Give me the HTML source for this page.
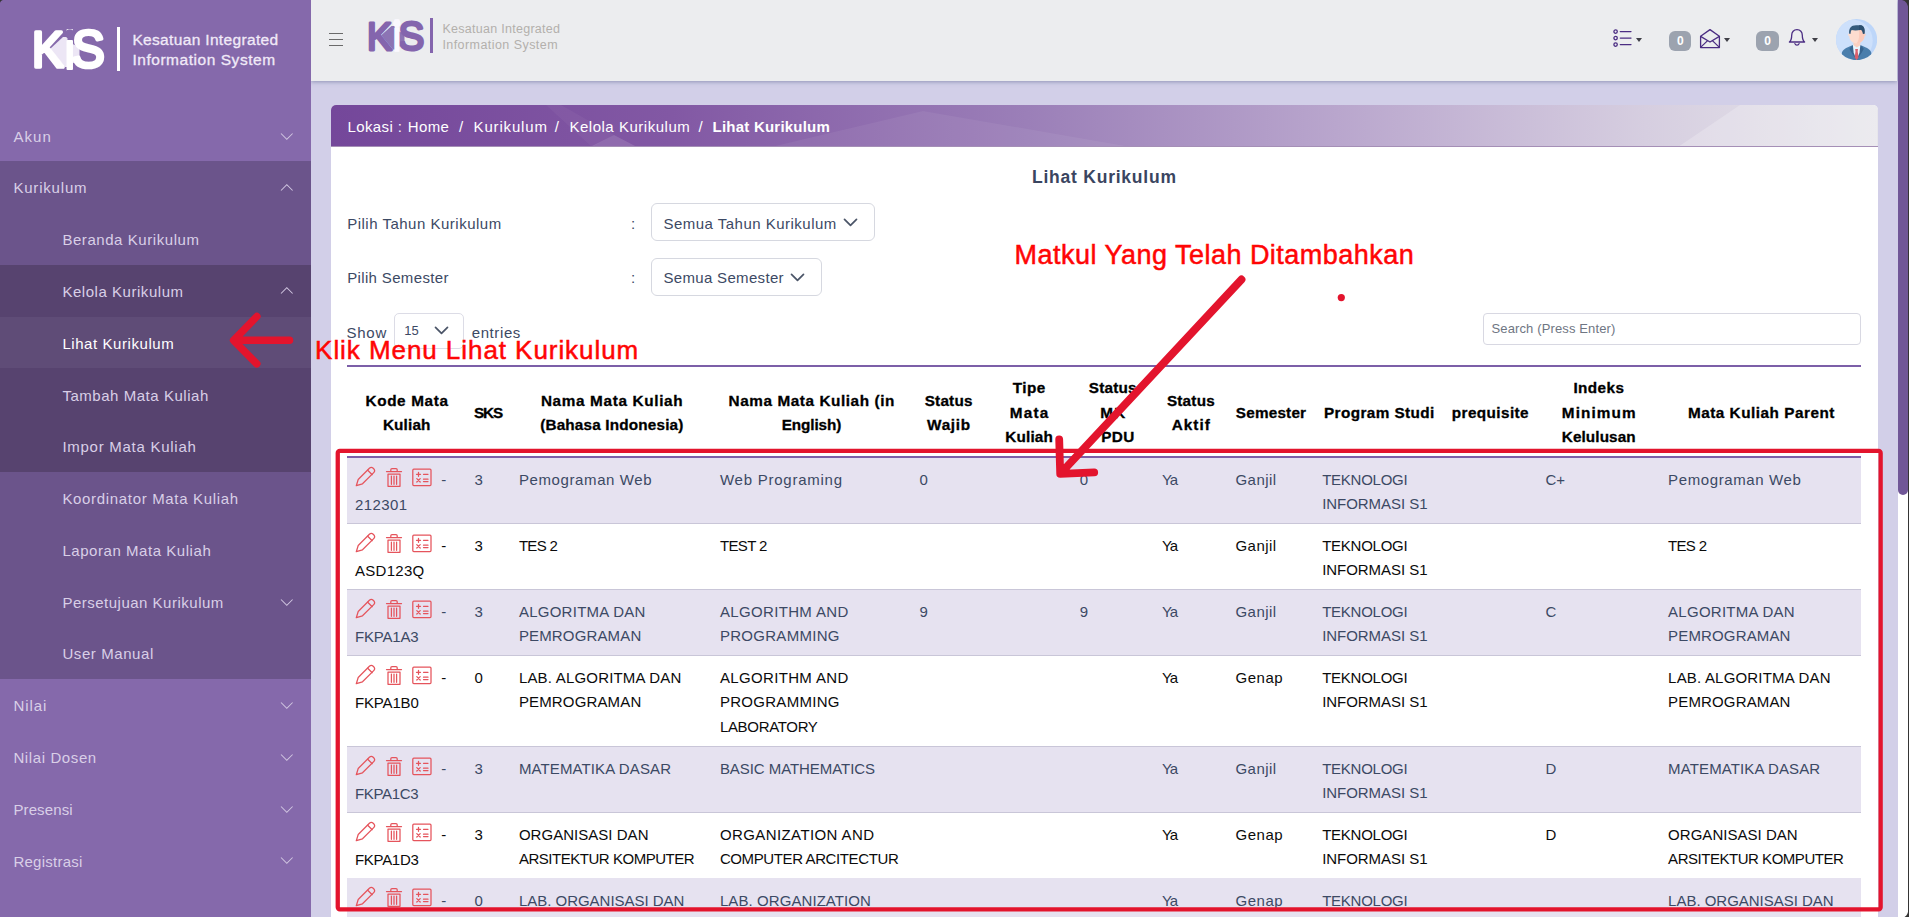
<!DOCTYPE html>
<html lang="id"><head><meta charset="utf-8"><title>Lihat Kurikulum - Kesatuan Integrated Information System</title>
<style>
html,body{margin:0;padding:0;}
body{width:1909px;height:917px;overflow:hidden;position:relative;background:#d2cfe8;font-family:"Liberation Sans",sans-serif;}
.b{position:absolute;display:block;}
.t{position:absolute;white-space:pre;line-height:20px;display:block;}
</style></head>
<body>
<div class="b" style="left:311px;top:0px;width:1598px;height:917px;background:#d2cfe8;"></div>
<header>
<div class="b" style="left:311px;top:0px;width:1586px;height:81px;background:#ecedef;box-shadow:0 1px 4px rgba(90,100,140,.55);"></div>
<div class="b" style="left:329px;top:33px;width:14px;height:1.2px;background:#6a6a6a;"></div>
<div class="b" style="left:329px;top:39px;width:14px;height:1.2px;background:#6a6a6a;"></div>
<div class="b" style="left:329px;top:45px;width:14px;height:1.2px;background:#6a6a6a;"></div>
<svg class="b" style="left:366.8px;top:17.9px" width="60" height="36.3" viewBox="-3 -3 76 46" font-family="Liberation Sans, sans-serif" font-size="50" stroke-linejoin="round" stroke-linecap="round" stroke-width="3.6">
<polygon points="15,19 28,7 32.5,7 32.5,37 30,37" fill="#8c74b4"/><polygon points="37.5,14 44.5,17 44.5,32 37.5,33" fill="#8c74b4"/>
<text transform="translate(-2.9,37.4) scale(.95,1)" fill="#8465ad" stroke="#8465ad">K</text>
<text transform="translate(37,37.4) scale(.98,1.02)" fill="#8465ad" stroke="#8465ad">S</text>
<text transform="translate(29.2,39.2) scale(1,1.085)" fill="#fbf9ff" stroke="#fbf9ff" stroke-width="2">i</text>
<circle cx="34.8" cy="3.9" r="4.7" fill="#faf8fe"/></svg>
<div class="b" style="left:430.3px;top:18px;width:2.6px;height:35px;background:#8465ad;"></div>
<span class="t" style="left:442.4px;top:19.2px;font-size:12.5px;color:#b3b0ac;letter-spacing:0.28px;">Kesatuan Integrated</span>
<span class="t" style="left:442.4px;top:35px;font-size:12.5px;color:#b3b0ac;letter-spacing:0.44px;">Information System</span>
<svg class="b" style="left:1612px;top:28px" width="21" height="20" viewBox="0 0 21 20" fill="none" stroke="#4b2d83" stroke-width="1.3" stroke-linecap="round">
<circle cx="3.6" cy="3.6" r="1.7"/><circle cx="3.6" cy="10.1" r="1.7"/><circle cx="3.6" cy="16.6" r="1.7"/>
<path d="M8.3 3.6H19M8.3 10.1H19M8.3 16.6H19"/></svg>
<div class="b" style="left:1636.4px;top:38px;width:0;height:0;border-left:3.8px solid transparent;border-right:3.8px solid transparent;border-top:4px solid #3f3f46"></div>
<div class="b" style="left:1669px;top:31px;width:22.4px;height:19.8px;background:#9ca3af;border-radius:6px;"></div>
<span class="t" style="left:1676.9px;top:31.1px;font-size:12px;color:#fff;font-weight:700;">0</span>
<svg class="b" style="left:1699px;top:27.5px" width="22" height="21" viewBox="0 0 22 21" fill="none" stroke="#4b2d83" stroke-width="1.3" stroke-linejoin="round">
<path d="M1.6 8.2 L11 1.6 L20.4 8.2 V19.6 H1.6 Z"/><path d="M1.6 8.4 L11 14 L20.4 8.4"/><path d="M1.6 19.4 L8.6 12.6 M20.4 19.4 L13.4 12.6"/></svg>
<div class="b" style="left:1724.4px;top:38px;width:0;height:0;border-left:3.8px solid transparent;border-right:3.8px solid transparent;border-top:4px solid #3f3f46"></div>
<div class="b" style="left:1756.4px;top:31px;width:22.4px;height:19.8px;background:#9ca3af;border-radius:6px;"></div>
<span class="t" style="left:1764.3px;top:31.1px;font-size:12px;color:#fff;font-weight:700;">0</span>
<svg class="b" style="left:1788px;top:28px" width="18" height="20" viewBox="0 0 18 20" fill="none" stroke="#4b2d83" stroke-width="1.3" stroke-linejoin="round" stroke-linecap="round">
<path d="M9 1.6c-3.3 0-5.3 2.5-5.3 5.6 0 3.6-.9 5.6-2.3 6.8h15.2c-1.4-1.2-2.3-3.2-2.3-6.8 0-3.1-2-5.6-5.3-5.6z"/><path d="M6.9 15.6a2.2 2.2 0 0 0 4.2 0"/></svg>
<div class="b" style="left:1812.4px;top:38px;width:0;height:0;border-left:3.8px solid transparent;border-right:3.8px solid transparent;border-top:4px solid #3f3f46"></div>
<svg class="b" style="left:1835.9px;top:18.8px" width="41.2" height="41.2" viewBox="0 0 41 41">
<defs><clipPath id="av"><circle cx="20.5" cy="20.5" r="20.5"/></clipPath></defs>
<g clip-path="url(#av)"><rect width="41" height="41" fill="#bdd6f9"/>
<circle cx="15.6" cy="21.5" r="21" fill="#cde0fb"/>
<path d="M5.7 41V34.5C6.2 30.6 9.5 29 16.3 26.2H24.7C31.5 29 34.8 30.6 35.3 34.5V41z" fill="#4a7eac"/>
<path d="M16.5 26.1L13.3 29.6L15.2 33.2L20.5 41zM24.5 26.1L27.7 29.6L25.8 33.2L20.5 41z" fill="#386590"/>
<path d="M16.8 25.8H24.2L23.4 33.5L20.5 40.5L17.6 33.5z" fill="#e9f4fc"/>
<path d="M19.1 29.8H21.9L21.6 32H19.4zM19.4 32H21.6L22.4 38.4L20.5 41L18.6 38.4z" fill="#d9606c"/>
<path d="M17.4 21h6.7v5.2l-3.3 2.2-3.4-2.2z" fill="#fbcfbf"/>
<circle cx="13.3" cy="15.8" r="1.3" fill="#fddccf"/><circle cx="28.2" cy="15.8" r="1.3" fill="#fccbbb"/>
<path d="M13.2 11V17C13.2 21.5 16.5 24.3 20.5 24.3C24.5 24.3 28.3 21.5 28.3 17V11z" fill="#fddccf"/>
<path d="M23 11H28.3V17C28.3 21.5 24.5 24.3 20.5 24.3C22.5 22 23 19 23 16z" fill="#fccbbb"/>
<path d="M13.1 14.8C12.5 9.2 15 6.2 20 6.2H24.6C27.6 6.4 29 9.5 28.3 14.8L26.8 14.6C26.8 12.8 26 11.3 24.6 10.7C21.5 11.7 18 11.7 15.6 11C14.8 11.9 14.6 13 14.6 14.6z" fill="#345b7d"/>
<path d="M23 6.2H24.6C27.6 6.4 29 9.5 28.3 14.8L26.8 14.6C26.8 12.8 26 11.3 24.6 10.7L23 11.1z" fill="#2b4f70"/>
</g></svg>
</header>
<aside><nav>
<div class="b" style="left:0px;top:0px;width:311px;height:917px;background:#8569ab;"></div>
<div class="b" style="left:0px;top:161px;width:311px;height:518px;background:#6b548b;"></div>
<div class="b" style="left:0px;top:265px;width:311px;height:207px;background:#57436f;"></div>
<div class="b" style="left:0px;top:316.5px;width:311px;height:51.5px;background:#5f4c77;"></div>
<svg class="b" style="left:32.2px;top:26.8px" width="76" height="46" viewBox="-3 -3 76 46" font-family="Liberation Sans, sans-serif" font-size="50" stroke-linejoin="round" stroke-linecap="round" stroke-width="3.6">
<polygon points="15,19 28,7 32.5,7 32.5,37 30,37" fill="#ece6f5"/><polygon points="37.5,14 44.5,17 44.5,32 37.5,33" fill="#ece6f5"/>
<text transform="translate(-2.9,37.4) scale(.95,1)" fill="#ffffff" stroke="#ffffff">K</text>
<text transform="translate(37,37.4) scale(.98,1.02)" fill="#ffffff" stroke="#ffffff">S</text>
<text transform="translate(29.2,39.2) scale(1,1.085)" fill="#ffffff" stroke="#ffffff" stroke-width="2">i</text>
<circle cx="34.8" cy="3.9" r="4.7" fill="#8569ab"/></svg>
<div class="b" style="left:117.3px;top:26.5px;width:2.9px;height:44.2px;background:#fff;"></div>
<span class="t" style="left:132.4px;top:29.9px;font-size:15.5px;color:#f1eaf8;letter-spacing:0.34px;-webkit-text-stroke:.3px #f1eaf8;">Kesatuan Integrated</span>
<span class="t" style="left:132.4px;top:49.5px;font-size:15.5px;color:#f1eaf8;letter-spacing:0.54px;-webkit-text-stroke:.3px #f1eaf8;">Information System</span>
<span class="t" style="left:13.4px;top:126.6px;font-size:15px;color:#d9cfe7;letter-spacing:1.1px;">Akun</span>
<svg class="b" style="left:280px;top:131.5px" width="14" height="9" viewBox="0 0 14 9" fill="none" stroke="#d0c5e0" stroke-width="1.05"><path d="M1 1.5L6.8 7.3L12.6 1.5"/></svg>
<span class="t" style="left:13.4px;top:178.4px;font-size:15px;color:#d9cfe7;letter-spacing:0.81px;">Kurikulum</span>
<svg class="b" style="left:280px;top:182.78px" width="14" height="9" viewBox="0 0 14 9" fill="none" stroke="#d0c5e0" stroke-width="1.05"><path d="M1 7.5L6.8 1.7L12.6 7.5"/></svg>
<span class="t" style="left:62.4px;top:230.2px;font-size:15px;color:#d9cfe7;letter-spacing:0.56px;">Beranda Kurikulum</span>
<span class="t" style="left:62.4px;top:281.9px;font-size:15px;color:#d9cfe7;letter-spacing:0.54px;">Kelola Kurikulum</span>
<svg class="b" style="left:280px;top:286.34px" width="14" height="9" viewBox="0 0 14 9" fill="none" stroke="#d0c5e0" stroke-width="1.05"><path d="M1 7.5L6.8 1.7L12.6 7.5"/></svg>
<span class="t" style="left:62.4px;top:333.7px;font-size:15px;color:#ffffff;letter-spacing:0.57px;">Lihat Kurikulum</span>
<span class="t" style="left:62.4px;top:385.5px;font-size:15px;color:#d9cfe7;letter-spacing:0.54px;">Tambah Mata Kuliah</span>
<span class="t" style="left:62.4px;top:437.3px;font-size:15px;color:#d9cfe7;letter-spacing:0.73px;">Impor Mata Kuliah</span>
<span class="t" style="left:62.4px;top:489.1px;font-size:15px;color:#d9cfe7;letter-spacing:0.67px;">Koordinator Mata Kuliah</span>
<span class="t" style="left:62.4px;top:540.8px;font-size:15px;color:#d9cfe7;letter-spacing:0.55px;">Laporan Mata Kuliah</span>
<span class="t" style="left:62.4px;top:592.6px;font-size:15px;color:#d9cfe7;letter-spacing:0.5px;">Persetujuan Kurikulum</span>
<svg class="b" style="left:280px;top:597.52px" width="14" height="9" viewBox="0 0 14 9" fill="none" stroke="#d0c5e0" stroke-width="1.05"><path d="M1 1.5L6.8 7.3L12.6 1.5"/></svg>
<span class="t" style="left:62.4px;top:644.4px;font-size:15px;color:#d9cfe7;letter-spacing:0.58px;">User Manual</span>
<span class="t" style="left:13.4px;top:696.2px;font-size:15px;color:#d9cfe7;letter-spacing:0.96px;">Nilai</span>
<svg class="b" style="left:280px;top:701.0800000000002px" width="14" height="9" viewBox="0 0 14 9" fill="none" stroke="#d0c5e0" stroke-width="1.05"><path d="M1 1.5L6.8 7.3L12.6 1.5"/></svg>
<span class="t" style="left:13.4px;top:748px;font-size:15px;color:#d9cfe7;letter-spacing:0.61px;">Nilai Dosen</span>
<svg class="b" style="left:280px;top:752.8600000000001px" width="14" height="9" viewBox="0 0 14 9" fill="none" stroke="#d0c5e0" stroke-width="1.05"><path d="M1 1.5L6.8 7.3L12.6 1.5"/></svg>
<span class="t" style="left:13.4px;top:799.7px;font-size:15px;color:#d9cfe7;letter-spacing:0.13px;">Presensi</span>
<svg class="b" style="left:280px;top:804.6400000000001px" width="14" height="9" viewBox="0 0 14 9" fill="none" stroke="#d0c5e0" stroke-width="1.05"><path d="M1 1.5L6.8 7.3L12.6 1.5"/></svg>
<span class="t" style="left:13.4px;top:851.5px;font-size:15px;color:#d9cfe7;letter-spacing:0.26px;">Registrasi</span>
<svg class="b" style="left:280px;top:856.4200000000001px" width="14" height="9" viewBox="0 0 14 9" fill="none" stroke="#d0c5e0" stroke-width="1.05"><path d="M1 1.5L6.8 7.3L12.6 1.5"/></svg>
</nav></aside>
<main>
<div class="b" style="left:331px;top:105px;width:1547.3px;height:812px;background:#fff;border-radius:5px 5px 0 0;"></div>
<div class="b" style="left:331px;top:105px;width:1547.3px;height:42px;border-radius:5px 5px 0 0;overflow:hidden;background:linear-gradient(90deg,#74479a 0%,#8258a4 22%,#9b7fb8 45%,#b9a6cd 65%,#d6cee0 85%,#e7e6eb 100%);border-bottom:1px solid #a58fb6;box-sizing:border-box">
<svg width="1546" height="42" viewBox="0 0 1546 42" style="position:absolute;left:0;top:0"><polygon points="259,42 283,30 306,42" fill="#fff" opacity=".13"/><polygon points="215,0 261,42 283,30 230,0" fill="#fff" opacity=".04"/><polygon points="440,42 592,6 800,42" fill="#fff" opacity=".06"/><polygon points="1347,42 1409,0 1546,0 1546,42" fill="#fff" opacity=".22"/></svg></div>
<span class="t" style="left:347.4px;top:117.2px;font-size:15px;color:#fff;letter-spacing:0.4px;">Lokasi :</span>
<span class="t" style="left:407.7px;top:117.2px;font-size:15px;color:#fff;letter-spacing:0.4px;">Home</span>
<span class="t" style="left:459px;top:117.2px;font-size:15px;color:#fff;letter-spacing:0.4px;">/</span>
<span class="t" style="left:473.6px;top:117.2px;font-size:15px;color:#fff;letter-spacing:0.83px;">Kurikulum</span>
<span class="t" style="left:554.8px;top:117.2px;font-size:15px;color:#fff;letter-spacing:0.4px;">/</span>
<span class="t" style="left:569.4px;top:117.2px;font-size:15px;color:#fff;letter-spacing:0.52px;">Kelola Kurikulum</span>
<span class="t" style="left:698.5px;top:117.2px;font-size:15px;color:#fff;letter-spacing:0.4px;">/</span>
<span class="t" style="left:712.6px;top:117.2px;font-size:15px;color:#fff;font-weight:700;letter-spacing:0.22px;">Lihat Kurikulum</span>
<span class="t" style="left:1032px;top:166.6px;font-size:17.5px;color:#3a4560;font-weight:700;letter-spacing:0.77px;">Lihat Kurikulum</span>
<span class="t" style="left:347.2px;top:213.5px;font-size:15px;color:#3c4964;letter-spacing:0.5px;">Pilih Tahun Kurikulum</span>
<span class="t" style="left:631px;top:213.5px;font-size:15px;color:#3c4964;">:</span>
<span class="t" style="left:347.2px;top:268.4px;font-size:15px;color:#3c4964;letter-spacing:0.35px;">Pilih Semester</span>
<span class="t" style="left:631px;top:268.4px;font-size:15px;color:#3c4964;">:</span>
<div class="b" style="left:651px;top:202.7px;width:223.5px;height:38.8px;border:1px solid #d6d8e0;border-radius:6px;background:#fff;box-sizing:border-box"></div>
<span class="t" style="left:663.4px;top:213.5px;font-size:15px;color:#3c4964;letter-spacing:0.49px;">Semua Tahun Kurikulum</span>
<svg class="b" style="left:843px;top:218.2px" width="15" height="9" viewBox="0 0 15 9" fill="none" stroke="#4b5568" stroke-width="1.7" stroke-linecap="round" stroke-linejoin="round"><path d="M1.5 1.3L7.5 7.3L13.5 1.3"/></svg>
<div class="b" style="left:651px;top:257.7px;width:170.5px;height:38.8px;border:1px solid #d6d8e0;border-radius:6px;background:#fff;box-sizing:border-box"></div>
<span class="t" style="left:663.4px;top:268.4px;font-size:15px;color:#3c4964;letter-spacing:0.33px;">Semua Semester</span>
<svg class="b" style="left:790px;top:273.1px" width="15" height="9" viewBox="0 0 15 9" fill="none" stroke="#4b5568" stroke-width="1.7" stroke-linecap="round" stroke-linejoin="round"><path d="M1.5 1.3L7.5 7.3L13.5 1.3"/></svg>
<span class="t" style="left:346.5px;top:322.6px;font-size:15px;color:#3c4964;letter-spacing:0.73px;">Show</span>
<div class="b" style="left:394px;top:313.4px;width:69.5px;height:36px;border:1px solid #dcdce6;border-radius:5px;background:#fff;box-sizing:border-box"></div>
<span class="t" style="left:404.2px;top:321.3px;font-size:13px;color:#3c4964;">15</span>
<svg class="b" style="left:433.5px;top:325.5px" width="15" height="9" viewBox="0 0 15 9" fill="none" stroke="#4b5568" stroke-width="1.7" stroke-linecap="round" stroke-linejoin="round"><path d="M1.5 1.3L7.5 7.3L13.5 1.3"/></svg>
<span class="t" style="left:471.7px;top:322.6px;font-size:15px;color:#3c4964;letter-spacing:0.61px;">entries</span>
<div class="b" style="left:1483px;top:313.4px;width:378px;height:31.2px;border:1px solid #d8d8e2;border-radius:4px;background:#fff;box-sizing:border-box"></div>
<span class="t" style="left:1491.5px;top:319px;font-size:13px;color:#6f7683;letter-spacing:0.13px;">Search (Press Enter)</span>
<div class="b" style="left:347px;top:365px;width:1514px;height:2px;background:#7c5fa8;"></div>
<div class="b" style="left:347px;top:455.8px;width:1514px;height:2px;background:#7c5fa8;"></div>
<span class="t" style="left:365.5px;top:390.5px;font-size:15.3px;color:#000;font-weight:700;letter-spacing:0.63px;-webkit-text-stroke:.3px #000;">Kode Mata</span>
<span class="t" style="left:382.9px;top:414.8px;font-size:15.3px;color:#000;font-weight:700;letter-spacing:0.15px;-webkit-text-stroke:.3px #000;">Kuliah</span>
<span class="t" style="left:474.1px;top:402.7px;font-size:15.3px;color:#000;font-weight:700;letter-spacing:-1.23px;-webkit-text-stroke:.3px #000;">SKS</span>
<span class="t" style="left:540.9px;top:390.5px;font-size:15.3px;color:#000;font-weight:700;letter-spacing:0.66px;-webkit-text-stroke:.3px #000;">Nama Mata Kuliah</span>
<span class="t" style="left:540.2px;top:414.8px;font-size:15.3px;color:#000;font-weight:700;letter-spacing:0.17px;-webkit-text-stroke:.3px #000;">(Bahasa Indonesia)</span>
<span class="t" style="left:728.6px;top:390.5px;font-size:15.3px;color:#000;font-weight:700;letter-spacing:0.58px;-webkit-text-stroke:.3px #000;">Nama Mata Kuliah (in</span>
<span class="t" style="left:781.7px;top:414.8px;font-size:15.3px;color:#000;font-weight:700;letter-spacing:-0.11px;-webkit-text-stroke:.3px #000;">English)</span>
<span class="t" style="left:924.7px;top:390.5px;font-size:15.3px;color:#000;font-weight:700;letter-spacing:0.21px;-webkit-text-stroke:.3px #000;">Status</span>
<span class="t" style="left:927.1px;top:414.8px;font-size:15.3px;color:#000;font-weight:700;letter-spacing:0.67px;-webkit-text-stroke:.3px #000;">Wajib</span>
<span class="t" style="left:1012.8px;top:378.4px;font-size:15.3px;color:#000;font-weight:700;letter-spacing:0.47px;-webkit-text-stroke:.3px #000;">Tipe</span>
<span class="t" style="left:1009.7px;top:402.7px;font-size:15.3px;color:#000;font-weight:700;letter-spacing:1.28px;-webkit-text-stroke:.3px #000;">Mata</span>
<span class="t" style="left:1005.3px;top:427px;font-size:15.3px;color:#000;font-weight:700;letter-spacing:0.15px;-webkit-text-stroke:.3px #000;">Kuliah</span>
<span class="t" style="left:1088.8px;top:378.4px;font-size:15.3px;color:#000;font-weight:700;letter-spacing:0.21px;-webkit-text-stroke:.3px #000;">Status</span>
<span class="t" style="left:1100.2px;top:402.7px;font-size:15.3px;color:#000;font-weight:700;letter-spacing:1.21px;-webkit-text-stroke:.3px #000;">MK</span>
<span class="t" style="left:1101.3px;top:427px;font-size:15.3px;color:#000;font-weight:700;letter-spacing:0.35px;-webkit-text-stroke:.3px #000;">PDU</span>
<span class="t" style="left:1166.9px;top:390.5px;font-size:15.3px;color:#000;font-weight:700;letter-spacing:0.21px;-webkit-text-stroke:.3px #000;">Status</span>
<span class="t" style="left:1171.8px;top:414.8px;font-size:15.3px;color:#000;font-weight:700;letter-spacing:1px;-webkit-text-stroke:.3px #000;">Aktif</span>
<span class="t" style="left:1235.8px;top:402.7px;font-size:15.3px;color:#000;font-weight:700;letter-spacing:0.2px;-webkit-text-stroke:.3px #000;">Semester</span>
<span class="t" style="left:1323.9px;top:402.7px;font-size:15.3px;color:#000;font-weight:700;letter-spacing:0.42px;-webkit-text-stroke:.3px #000;">Program Studi</span>
<span class="t" style="left:1451.8px;top:402.7px;font-size:15.3px;color:#000;font-weight:700;letter-spacing:0.41px;-webkit-text-stroke:.3px #000;">prequisite</span>
<span class="t" style="left:1573.4px;top:378.4px;font-size:15.3px;color:#000;font-weight:700;letter-spacing:0.43px;-webkit-text-stroke:.3px #000;">Indeks</span>
<span class="t" style="left:1561.8px;top:402.7px;font-size:15.3px;color:#000;font-weight:700;letter-spacing:1.11px;-webkit-text-stroke:.3px #000;">Minimum</span>
<span class="t" style="left:1561.8px;top:427px;font-size:15.3px;color:#000;font-weight:700;letter-spacing:0.09px;-webkit-text-stroke:.3px #000;">Kelulusan</span>
<span class="t" style="left:1687.9px;top:402.7px;font-size:15.3px;color:#000;font-weight:700;letter-spacing:0.52px;-webkit-text-stroke:.3px #000;">Mata Kuliah Parent</span>
<div class="b" style="left:347px;top:458px;width:1514px;height:65px;background:#e6e2f0;"></div>
<div class="b" style="left:347px;top:523px;width:1514px;height:1px;background:#c9c6d8;"></div>
<svg class="b" style="left:355px;top:466px" width="78" height="22" viewBox="0 0 78 22" fill="none" stroke="#e5545c" stroke-width="1.25" stroke-linejoin="round" stroke-linecap="round">
<path d="M1.3 19.7L3.2 13.5L14.4 2.3a2.7 2.7 0 0 1 3.8 0l.500.5a2.7 2.7 0 0 1 0 3.8L7.5 17.8z"/><path d="M12.7 4.2l4.5 4.5"/>
<path d="M31.5 5.5h15M35.8 5.3v-1.6q0-1.2 1.2-1.2h4q1.2 0 1.2 1.2v1.6M33 8h12v12.3H33zM36.4 10v8.3M39 10v8.3M41.6 10v8.3" />
<rect x="57.8" y="3.2" width="18.2" height="16.3" rx="1"/><path d="M61.5 8.3h4M63.5 6.3v4M68.5 8.3h4.5M61.8 12.6l3.4 3.4M65.2 12.6l-3.4 3.4M68.5 13.2h4.5M68.5 15.5h4.5"/></svg>
<span class="t" style="left:441.2px;top:469.6px;font-size:15px;color:#3c4964;">-</span>
<span class="t" style="left:355px;top:494.8px;font-size:15px;color:#3c4964;letter-spacing:0.39px;">212301</span>
<span class="t" style="left:474.5px;top:469.6px;font-size:15px;color:#3c4964;">3</span>
<span class="t" style="left:518.9px;top:469.6px;font-size:15px;color:#3c4964;letter-spacing:0.61px;">Pemograman Web</span>
<span class="t" style="left:719.9px;top:469.6px;font-size:15px;color:#3c4964;letter-spacing:0.76px;">Web Programing</span>
<span class="t" style="left:919.5px;top:469.6px;font-size:15px;color:#3c4964;">0</span>
<span class="t" style="left:1079.8px;top:469.6px;font-size:15px;color:#3c4964;">0</span>
<span class="t" style="left:1161.9px;top:469.6px;font-size:15px;color:#3c4964;letter-spacing:-0.93px;">Ya</span>
<span class="t" style="left:1235.4px;top:469.6px;font-size:15px;color:#3c4964;letter-spacing:0.49px;">Ganjil</span>
<span class="t" style="left:1322.2px;top:469.6px;font-size:15px;color:#3c4964;letter-spacing:-0.26px;">TEKNOLOGI</span>
<span class="t" style="left:1322.2px;top:494.1px;font-size:15px;color:#3c4964;letter-spacing:-0.05px;">INFORMASI S1</span>
<span class="t" style="left:1545.5px;top:469.6px;font-size:15px;color:#3c4964;">C+</span>
<span class="t" style="left:1668.1px;top:469.6px;font-size:15px;color:#3c4964;letter-spacing:0.61px;">Pemograman Web</span>
<div class="b" style="left:347px;top:589px;width:1514px;height:1px;background:#c9c6d8;"></div>
<svg class="b" style="left:355px;top:532px" width="78" height="22" viewBox="0 0 78 22" fill="none" stroke="#e5545c" stroke-width="1.25" stroke-linejoin="round" stroke-linecap="round">
<path d="M1.3 19.7L3.2 13.5L14.4 2.3a2.7 2.7 0 0 1 3.8 0l.500.5a2.7 2.7 0 0 1 0 3.8L7.5 17.8z"/><path d="M12.7 4.2l4.5 4.5"/>
<path d="M31.5 5.5h15M35.8 5.3v-1.6q0-1.2 1.2-1.2h4q1.2 0 1.2 1.2v1.6M33 8h12v12.3H33zM36.4 10v8.3M39 10v8.3M41.6 10v8.3" />
<rect x="57.8" y="3.2" width="18.2" height="16.3" rx="1"/><path d="M61.5 8.3h4M63.5 6.3v4M68.5 8.3h4.5M61.8 12.6l3.4 3.4M65.2 12.6l-3.4 3.4M68.5 13.2h4.5M68.5 15.5h4.5"/></svg>
<span class="t" style="left:441.2px;top:535.6px;font-size:15px;color:#0b0b0b;">-</span>
<span class="t" style="left:355px;top:560.8px;font-size:15px;color:#0b0b0b;letter-spacing:0.29px;">ASD123Q</span>
<span class="t" style="left:474.5px;top:535.6px;font-size:15px;color:#0b0b0b;">3</span>
<span class="t" style="left:518.9px;top:535.6px;font-size:15px;color:#0b0b0b;letter-spacing:-0.7px;">TES 2</span>
<span class="t" style="left:719.9px;top:535.6px;font-size:15px;color:#0b0b0b;letter-spacing:-0.61px;">TEST 2</span>
<span class="t" style="left:1161.9px;top:535.6px;font-size:15px;color:#0b0b0b;letter-spacing:-0.93px;">Ya</span>
<span class="t" style="left:1235.4px;top:535.6px;font-size:15px;color:#0b0b0b;letter-spacing:0.49px;">Ganjil</span>
<span class="t" style="left:1322.2px;top:535.6px;font-size:15px;color:#0b0b0b;letter-spacing:-0.26px;">TEKNOLOGI</span>
<span class="t" style="left:1322.2px;top:560.1px;font-size:15px;color:#0b0b0b;letter-spacing:-0.05px;">INFORMASI S1</span>
<span class="t" style="left:1668.1px;top:535.6px;font-size:15px;color:#0b0b0b;letter-spacing:-0.7px;">TES 2</span>
<div class="b" style="left:347px;top:590px;width:1514px;height:65px;background:#e6e2f0;"></div>
<div class="b" style="left:347px;top:655px;width:1514px;height:1px;background:#c9c6d8;"></div>
<svg class="b" style="left:355px;top:598px" width="78" height="22" viewBox="0 0 78 22" fill="none" stroke="#e5545c" stroke-width="1.25" stroke-linejoin="round" stroke-linecap="round">
<path d="M1.3 19.7L3.2 13.5L14.4 2.3a2.7 2.7 0 0 1 3.8 0l.500.5a2.7 2.7 0 0 1 0 3.8L7.5 17.8z"/><path d="M12.7 4.2l4.5 4.5"/>
<path d="M31.5 5.5h15M35.8 5.3v-1.6q0-1.2 1.2-1.2h4q1.2 0 1.2 1.2v1.6M33 8h12v12.3H33zM36.4 10v8.3M39 10v8.3M41.6 10v8.3" />
<rect x="57.8" y="3.2" width="18.2" height="16.3" rx="1"/><path d="M61.5 8.3h4M63.5 6.3v4M68.5 8.3h4.5M61.8 12.6l3.4 3.4M65.2 12.6l-3.4 3.4M68.5 13.2h4.5M68.5 15.5h4.5"/></svg>
<span class="t" style="left:441.2px;top:601.6px;font-size:15px;color:#3c4964;">-</span>
<span class="t" style="left:355px;top:626.8px;font-size:15px;color:#3c4964;letter-spacing:-0.19px;">FKPA1A3</span>
<span class="t" style="left:474.5px;top:601.6px;font-size:15px;color:#3c4964;">3</span>
<span class="t" style="left:518.9px;top:601.6px;font-size:15px;color:#3c4964;letter-spacing:0.26px;">ALGORITMA DAN</span>
<span class="t" style="left:518.9px;top:626.1px;font-size:15px;color:#3c4964;letter-spacing:0.15px;">PEMROGRAMAN</span>
<span class="t" style="left:719.9px;top:601.6px;font-size:15px;color:#3c4964;letter-spacing:0.35px;">ALGORITHM AND</span>
<span class="t" style="left:719.9px;top:626.1px;font-size:15px;color:#3c4964;letter-spacing:0.29px;">PROGRAMMING</span>
<span class="t" style="left:919.5px;top:601.6px;font-size:15px;color:#3c4964;">9</span>
<span class="t" style="left:1079.8px;top:601.6px;font-size:15px;color:#3c4964;">9</span>
<span class="t" style="left:1161.9px;top:601.6px;font-size:15px;color:#3c4964;letter-spacing:-0.93px;">Ya</span>
<span class="t" style="left:1235.4px;top:601.6px;font-size:15px;color:#3c4964;letter-spacing:0.49px;">Ganjil</span>
<span class="t" style="left:1322.2px;top:601.6px;font-size:15px;color:#3c4964;letter-spacing:-0.26px;">TEKNOLOGI</span>
<span class="t" style="left:1322.2px;top:626.1px;font-size:15px;color:#3c4964;letter-spacing:-0.05px;">INFORMASI S1</span>
<span class="t" style="left:1545.5px;top:601.6px;font-size:15px;color:#3c4964;">C</span>
<span class="t" style="left:1668.1px;top:601.6px;font-size:15px;color:#3c4964;letter-spacing:0.26px;">ALGORITMA DAN</span>
<span class="t" style="left:1668.1px;top:626.1px;font-size:15px;color:#3c4964;letter-spacing:0.15px;">PEMROGRAMAN</span>
<div class="b" style="left:347px;top:746px;width:1514px;height:1px;background:#c9c6d8;"></div>
<svg class="b" style="left:355px;top:664px" width="78" height="22" viewBox="0 0 78 22" fill="none" stroke="#e5545c" stroke-width="1.25" stroke-linejoin="round" stroke-linecap="round">
<path d="M1.3 19.7L3.2 13.5L14.4 2.3a2.7 2.7 0 0 1 3.8 0l.500.5a2.7 2.7 0 0 1 0 3.8L7.5 17.8z"/><path d="M12.7 4.2l4.5 4.5"/>
<path d="M31.5 5.5h15M35.8 5.3v-1.6q0-1.2 1.2-1.2h4q1.2 0 1.2 1.2v1.6M33 8h12v12.3H33zM36.4 10v8.3M39 10v8.3M41.6 10v8.3" />
<rect x="57.8" y="3.2" width="18.2" height="16.3" rx="1"/><path d="M61.5 8.3h4M63.5 6.3v4M68.5 8.3h4.5M61.8 12.6l3.4 3.4M65.2 12.6l-3.4 3.4M68.5 13.2h4.5M68.5 15.5h4.5"/></svg>
<span class="t" style="left:441.2px;top:667.6px;font-size:15px;color:#0b0b0b;">-</span>
<span class="t" style="left:355px;top:692.8px;font-size:15px;color:#0b0b0b;letter-spacing:-0.16px;">FKPA1B0</span>
<span class="t" style="left:474.5px;top:667.6px;font-size:15px;color:#0b0b0b;">0</span>
<span class="t" style="left:518.9px;top:667.6px;font-size:15px;color:#0b0b0b;letter-spacing:0.19px;">LAB. ALGORITMA DAN</span>
<span class="t" style="left:518.9px;top:692.1px;font-size:15px;color:#0b0b0b;letter-spacing:0.15px;">PEMROGRAMAN</span>
<span class="t" style="left:719.9px;top:667.6px;font-size:15px;color:#0b0b0b;letter-spacing:0.35px;">ALGORITHM AND</span>
<span class="t" style="left:719.9px;top:692.1px;font-size:15px;color:#0b0b0b;letter-spacing:0.29px;">PROGRAMMING</span>
<span class="t" style="left:719.9px;top:716.6px;font-size:15px;color:#0b0b0b;letter-spacing:-0.32px;">LABORATORY</span>
<span class="t" style="left:1161.9px;top:667.6px;font-size:15px;color:#0b0b0b;letter-spacing:-0.93px;">Ya</span>
<span class="t" style="left:1235.4px;top:667.6px;font-size:15px;color:#0b0b0b;letter-spacing:0.57px;">Genap</span>
<span class="t" style="left:1322.2px;top:667.6px;font-size:15px;color:#0b0b0b;letter-spacing:-0.26px;">TEKNOLOGI</span>
<span class="t" style="left:1322.2px;top:692.1px;font-size:15px;color:#0b0b0b;letter-spacing:-0.05px;">INFORMASI S1</span>
<span class="t" style="left:1668.1px;top:667.6px;font-size:15px;color:#0b0b0b;letter-spacing:0.19px;">LAB. ALGORITMA DAN</span>
<span class="t" style="left:1668.1px;top:692.1px;font-size:15px;color:#0b0b0b;letter-spacing:0.15px;">PEMROGRAMAN</span>
<div class="b" style="left:347px;top:747px;width:1514px;height:65.2px;background:#e6e2f0;"></div>
<div class="b" style="left:347px;top:812.2px;width:1514px;height:1px;background:#c9c6d8;"></div>
<svg class="b" style="left:355px;top:755px" width="78" height="22" viewBox="0 0 78 22" fill="none" stroke="#e5545c" stroke-width="1.25" stroke-linejoin="round" stroke-linecap="round">
<path d="M1.3 19.7L3.2 13.5L14.4 2.3a2.7 2.7 0 0 1 3.8 0l.500.5a2.7 2.7 0 0 1 0 3.8L7.5 17.8z"/><path d="M12.7 4.2l4.5 4.5"/>
<path d="M31.5 5.5h15M35.8 5.3v-1.6q0-1.2 1.2-1.2h4q1.2 0 1.2 1.2v1.6M33 8h12v12.3H33zM36.4 10v8.3M39 10v8.3M41.6 10v8.3" />
<rect x="57.8" y="3.2" width="18.2" height="16.3" rx="1"/><path d="M61.5 8.3h4M63.5 6.3v4M68.5 8.3h4.5M61.8 12.6l3.4 3.4M65.2 12.6l-3.4 3.4M68.5 13.2h4.5M68.5 15.5h4.5"/></svg>
<span class="t" style="left:441.2px;top:758.6px;font-size:15px;color:#3c4964;">-</span>
<span class="t" style="left:355px;top:783.8px;font-size:15px;color:#3c4964;letter-spacing:-0.33px;">FKPA1C3</span>
<span class="t" style="left:474.5px;top:758.6px;font-size:15px;color:#3c4964;">3</span>
<span class="t" style="left:518.9px;top:758.6px;font-size:15px;color:#3c4964;letter-spacing:0.12px;">MATEMATIKA DASAR</span>
<span class="t" style="left:719.9px;top:758.6px;font-size:15px;color:#3c4964;letter-spacing:-0.06px;">BASIC MATHEMATICS</span>
<span class="t" style="left:1161.9px;top:758.6px;font-size:15px;color:#3c4964;letter-spacing:-0.93px;">Ya</span>
<span class="t" style="left:1235.4px;top:758.6px;font-size:15px;color:#3c4964;letter-spacing:0.49px;">Ganjil</span>
<span class="t" style="left:1322.2px;top:758.6px;font-size:15px;color:#3c4964;letter-spacing:-0.26px;">TEKNOLOGI</span>
<span class="t" style="left:1322.2px;top:783.1px;font-size:15px;color:#3c4964;letter-spacing:-0.05px;">INFORMASI S1</span>
<span class="t" style="left:1545.5px;top:758.6px;font-size:15px;color:#3c4964;">D</span>
<span class="t" style="left:1668.1px;top:758.6px;font-size:15px;color:#3c4964;letter-spacing:0.12px;">MATEMATIKA DASAR</span>
<div class="b" style="left:347px;top:877.9px;width:1514px;height:1px;background:#c9c6d8;"></div>
<svg class="b" style="left:355px;top:820.9px" width="78" height="22" viewBox="0 0 78 22" fill="none" stroke="#e5545c" stroke-width="1.25" stroke-linejoin="round" stroke-linecap="round">
<path d="M1.3 19.7L3.2 13.5L14.4 2.3a2.7 2.7 0 0 1 3.8 0l.500.5a2.7 2.7 0 0 1 0 3.8L7.5 17.8z"/><path d="M12.7 4.2l4.5 4.5"/>
<path d="M31.5 5.5h15M35.8 5.3v-1.6q0-1.2 1.2-1.2h4q1.2 0 1.2 1.2v1.6M33 8h12v12.3H33zM36.4 10v8.3M39 10v8.3M41.6 10v8.3" />
<rect x="57.8" y="3.2" width="18.2" height="16.3" rx="1"/><path d="M61.5 8.3h4M63.5 6.3v4M68.5 8.3h4.5M61.8 12.6l3.4 3.4M65.2 12.6l-3.4 3.4M68.5 13.2h4.5M68.5 15.5h4.5"/></svg>
<span class="t" style="left:441.2px;top:824.5px;font-size:15px;color:#0b0b0b;">-</span>
<span class="t" style="left:355px;top:849.7px;font-size:15px;color:#0b0b0b;letter-spacing:-0.3px;">FKPA1D3</span>
<span class="t" style="left:474.5px;top:824.5px;font-size:15px;color:#0b0b0b;">3</span>
<span class="t" style="left:518.9px;top:824.5px;font-size:15px;color:#0b0b0b;letter-spacing:0.03px;">ORGANISASI DAN</span>
<span class="t" style="left:518.9px;top:849px;font-size:15px;color:#0b0b0b;letter-spacing:-0.47px;">ARSITEKTUR KOMPUTER</span>
<span class="t" style="left:719.9px;top:824.5px;font-size:15px;color:#0b0b0b;letter-spacing:0.41px;">ORGANIZATION AND</span>
<span class="t" style="left:719.9px;top:849px;font-size:15px;color:#0b0b0b;letter-spacing:-0.39px;">COMPUTER ARCITECTUR</span>
<span class="t" style="left:1161.9px;top:824.5px;font-size:15px;color:#0b0b0b;letter-spacing:-0.93px;">Ya</span>
<span class="t" style="left:1235.4px;top:824.5px;font-size:15px;color:#0b0b0b;letter-spacing:0.57px;">Genap</span>
<span class="t" style="left:1322.2px;top:824.5px;font-size:15px;color:#0b0b0b;letter-spacing:-0.26px;">TEKNOLOGI</span>
<span class="t" style="left:1322.2px;top:849px;font-size:15px;color:#0b0b0b;letter-spacing:-0.05px;">INFORMASI S1</span>
<span class="t" style="left:1545.5px;top:824.5px;font-size:15px;color:#0b0b0b;">D</span>
<span class="t" style="left:1668.1px;top:824.5px;font-size:15px;color:#0b0b0b;letter-spacing:0.03px;">ORGANISASI DAN</span>
<span class="t" style="left:1668.1px;top:849px;font-size:15px;color:#0b0b0b;letter-spacing:-0.47px;">ARSITEKTUR KOMPUTER</span>
<div class="b" style="left:347px;top:878.3px;width:1514px;height:65px;background:#e6e2f0;"></div>
<div class="b" style="left:347px;top:943.3px;width:1514px;height:1px;background:#c9c6d8;"></div>
<svg class="b" style="left:355px;top:886.3px" width="78" height="22" viewBox="0 0 78 22" fill="none" stroke="#e5545c" stroke-width="1.25" stroke-linejoin="round" stroke-linecap="round">
<path d="M1.3 19.7L3.2 13.5L14.4 2.3a2.7 2.7 0 0 1 3.8 0l.500.5a2.7 2.7 0 0 1 0 3.8L7.5 17.8z"/><path d="M12.7 4.2l4.5 4.5"/>
<path d="M31.5 5.5h15M35.8 5.3v-1.6q0-1.2 1.2-1.2h4q1.2 0 1.2 1.2v1.6M33 8h12v12.3H33zM36.4 10v8.3M39 10v8.3M41.6 10v8.3" />
<rect x="57.8" y="3.2" width="18.2" height="16.3" rx="1"/><path d="M61.5 8.3h4M63.5 6.3v4M68.5 8.3h4.5M61.8 12.6l3.4 3.4M65.2 12.6l-3.4 3.4M68.5 13.2h4.5M68.5 15.5h4.5"/></svg>
<span class="t" style="left:441.2px;top:890.7px;font-size:15px;color:#3c4964;">-</span>
<span class="t" style="left:355px;top:915.9px;font-size:15px;color:#3c4964;letter-spacing:-0.16px;">FKPA1E0</span>
<span class="t" style="left:474.5px;top:890.7px;font-size:15px;color:#3c4964;">0</span>
<span class="t" style="left:518.9px;top:890.7px;font-size:15px;color:#3c4964;letter-spacing:-0.02px;">LAB. ORGANISASI DAN</span>
<span class="t" style="left:518.9px;top:915.2px;font-size:15px;color:#3c4964;letter-spacing:-0.47px;">ARSITEKTUR KOMPUTER</span>
<span class="t" style="left:719.9px;top:890.7px;font-size:15px;color:#3c4964;letter-spacing:0.08px;">LAB. ORGANIZATION</span>
<span class="t" style="left:720.5px;top:915.2px;font-size:15px;color:#3c4964;letter-spacing:-0.45px;">AND COMPUTER</span>
<span class="t" style="left:1161.9px;top:890.7px;font-size:15px;color:#3c4964;letter-spacing:-0.93px;">Ya</span>
<span class="t" style="left:1235.4px;top:890.7px;font-size:15px;color:#3c4964;letter-spacing:0.57px;">Genap</span>
<span class="t" style="left:1322.2px;top:890.7px;font-size:15px;color:#3c4964;letter-spacing:-0.26px;">TEKNOLOGI</span>
<span class="t" style="left:1322.2px;top:915.2px;font-size:15px;color:#3c4964;letter-spacing:-0.05px;">INFORMASI S1</span>
<span class="t" style="left:1668.1px;top:890.7px;font-size:15px;color:#3c4964;letter-spacing:-0.02px;">LAB. ORGANISASI DAN</span>
<span class="t" style="left:1668.1px;top:915.2px;font-size:15px;color:#3c4964;letter-spacing:-0.47px;">ARSITEKTUR KOMPUTER</span>
</main>
<section>
<svg class="b" style="left:0;top:0" width="1909" height="917" viewBox="0 0 1909 917" fill="none" stroke="#e3142d" stroke-linecap="round" stroke-linejoin="round">
<rect x="337.75" y="450.9" width="1542.9" height="458.4" rx="2" stroke-width="4.3"/>
<path d="M289.5 340.3H234M256.8 316.5L233.6 340.3L256.8 363.8" stroke-width="7.5"/>
<path d="M1241.5 279.5L1060.4 473.6M1059.2 439.5L1060.2 473.8L1094.2 472.3" stroke-width="7.8"/>
<circle cx="1341.3" cy="297.6" r="3.6" fill="#e3142d" stroke="none"/>
</svg>
<span class="t" style="left:315.1px;top:340.1px;font-size:26px;color:#ff0505;letter-spacing:0.94px;-webkit-text-stroke:.5px #ff0505;">Klik Menu Lihat Kurikulum</span>
<span class="t" style="left:1014.6px;top:245px;font-size:27px;color:#ff0505;letter-spacing:0.48px;-webkit-text-stroke:.5px #ff0505;">Matkul Yang Telah Ditambahkan</span>
</section>
<div class="b" style="left:1897.8px;top:0px;width:11.2px;height:917px;background:#fff;"></div>
<div class="b" style="left:1898px;top:-10px;width:10px;height:505px;background:#705697;border-radius:5px;"></div>
<div class="b" style="left:1908px;top:0px;width:1px;height:917px;background:#353535;"></div>
<svg class="b" style="left:1897px;top:905px" width="12" height="12" viewBox="0 0 12 12"><path d="M11.3 4Q11.2 10 7.5 12H12V4z" fill="#353535"/></svg>
<svg class="b" style="left:0;top:0" width="1909" height="12" viewBox="0 0 1909 12"><path d="M1902 0Q1908 .8 1908.4 10V0zM0 0H2.8Q.600 .600 0 2.8z" fill="#353535"/></svg>
</body></html>
